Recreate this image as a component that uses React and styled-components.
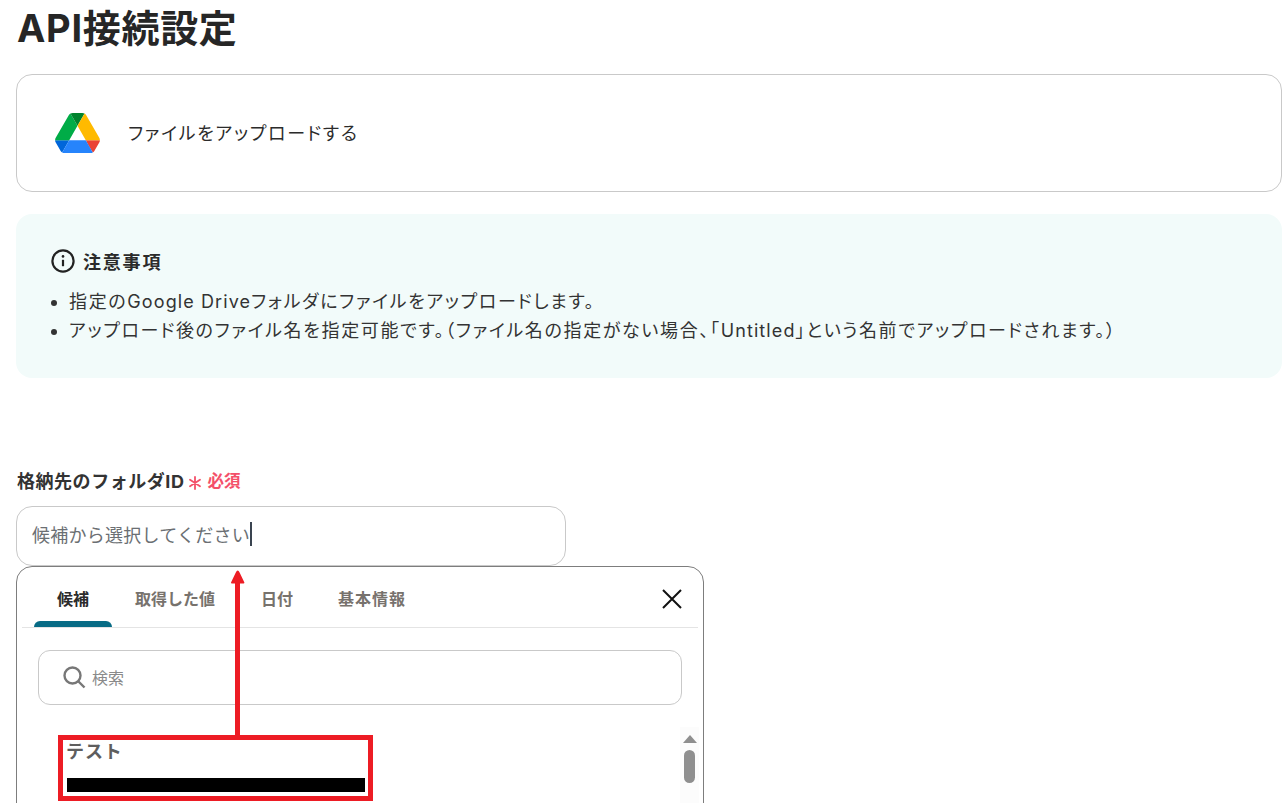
import React from "react";
import styled, { createGlobalStyle } from "styled-components";

const Global = createGlobalStyle`
  html, body { margin: 0; padding: 0; background: #fff; overflow: hidden; }
  body { font-family: Inter, "Noto Sans CJK JP", sans-serif; color: #2b2b2b; }
  * { box-sizing: border-box; }
`;
const Page = styled.div`
  position: relative;
  width: 1288px;
  height: 803px;
  overflow: hidden;
  padding: 0 6px 0 16px;
`;
const Title = styled.h1`
  margin: 0;
  height: 74px;
  padding-left: 1px;
  padding-top: 3px;
  font-size: 38px;
  line-height: 50px;
  letter-spacing: 0.7px;
  font-weight: 700;
  color: #262626;
`;
const ActionCard = styled.div`
  display: flex;
  align-items: center;
  gap: 28px;
  height: 118px;
  padding-left: 38px;
  border: 1px solid #c9c9c9;
  border-radius: 16px;
  font-size: 18px;
  letter-spacing: 0.095em;
  font-feature-settings: "palt";
`;
const CardLabel = styled.span`
  margin-top: -2px;
`;
const Notice = styled.section`
  margin-top: 22px;
  height: 164px;
  padding: 32px 35px 0;
  border-radius: 16px;
  background: #f2fbfa;
`;
const NoticeHead = styled.div`
  display: flex;
  align-items: center;
  gap: 8px;
  height: 30px;
  font-size: 18px;
  font-weight: 700;
  letter-spacing: 0.1em;
  font-feature-settings: "palt";
`;
const NoticeList = styled.ul`
  margin: 11px 0 0;
  padding: 0 0 0 18px;
  font-size: 18px;
  line-height: 29px;
  letter-spacing: 0.092em;
  font-feature-settings: "palt";
  color: #333;
`;
const Latin = styled.span`
  letter-spacing: 1.1px;
`;
const Field = styled.div`
  margin-top: 87px;
  width: 688px;
`;
const Label = styled.div`
  display: flex;
  align-items: center;
  height: 30px;
  padding-left: 1px;
  font-size: 18px;
  font-weight: 700;
  letter-spacing: 0.03em;
  color: #333;
`;
const Required = styled.span`
  display: inline-flex;
  align-items: center;
  margin-left: 4px;
  gap: 5px;
  font-size: 16.5px;
  font-weight: 700;
  letter-spacing: 0;
  color: #f4506a;
`;
const AsteriskMark = styled.svg`
  margin-top: 5px;
`;
const Input = styled.div`
  display: flex;
  align-items: center;
  margin-top: 11px;
  width: 550px;
  height: 60px;
  padding-left: 15px;
  padding-bottom: 4px;
  border: 1px solid #c9c9c9;
  border-radius: 16px;
  font-size: 18px;
  letter-spacing: 0.25px;
  color: #6b6f73;
`;
const Caret = styled.span`
  width: 2px;
  height: 24px;
  background: #3a4450;
`;
const Popover = styled.div`
  height: 300px;
  padding: 0 5px;
  border: 1px solid #7d7d7d;
  border-radius: 16px 16px 0 0;
  background: #fff;
`;
const TabBar = styled.div`
  position: relative;
  display: flex;
  height: 61px;
  border-bottom: 1px solid #e4e4e4;
`;
const Tab = styled.div`
  position: relative;
  width: ${(p) => p.$w}px;
  padding-top: 21px;
  text-align: center;
  font-size: 16px;
  line-height: 22px;
  font-weight: 700;
  letter-spacing: ${(p) => p.$track || 0}px;
  color: ${(p) => (p.$active ? "#2b2b2b" : "#77726d")};
  ${(p) =>
    p.$active &&
    `&::after { content: ""; position: absolute; left: 0; right: 0; bottom: 0; height: 6px; background: #076b85; border-radius: 6px 6px 0 0; }`}
`;
const Tabs = styled.div`
  display: flex;
  padding-left: 12px;
`;
const Close = styled.div`
  position: absolute;
  right: 16px;
  top: 22px;
  width: 20px;
  height: 20px;
`;
const Search = styled.div`
  display: flex;
  align-items: center;
  gap: 6px;
  margin: 22px 16px 0;
  height: 55px;
  padding-left: 23px;
  padding-bottom: 1px;
  border: 1px solid #c9c9c9;
  border-radius: 12px;
  font-size: 16px;
  color: #8a8a8a;
`;
const ListArea = styled.div`
  position: relative;
  display: flex;
  flex-direction: column;
  height: 100px;
  padding: 35px 0 0 44px;
`;
const ItemTitle = styled.div`
  font-size: 18px;
  line-height: 24px;
  font-weight: 700;
  letter-spacing: 0.9px;
  color: #5e5e5e;
`;
const Redacted = styled.div`
  margin: 14px 0 0 1px;
  width: 298px;
  height: 14px;
  background: #000;
`;
const Scrollbar = styled.div`
  position: absolute;
  right: -1px;
  top: 22px;
  width: 19px;
  height: 80px;
  background: #fcfcfc;
`;
const ScrollArrow = styled.div`
  margin: 8px auto 0;
  width: 0;
  height: 0;
  border-left: 7px solid transparent;
  border-right: 7px solid transparent;
  border-bottom: 8px solid #8f8f8f;
`;
const ScrollThumb = styled.div`
  margin: 7px auto 0;
  width: 11px;
  height: 33px;
  border-radius: 6px;
  background: #8f8f8f;
`;
const ArrowShaft = styled.div`
  position: absolute;
  left: 235px;
  top: 580px;
  width: 5px;
  height: 158px;
  background: #ed1c24;
`;
const ArrowHeadMark = styled.svg`
  position: absolute;
  left: 231px;
  top: 570px;
`;
const Highlight = styled.div`
  position: absolute;
  left: 58px;
  top: 735px;
  width: 315px;
  height: 66px;
  border: 5px solid #ed1c24;
`;

const DriveLogo = () => (
  <svg width="45" height="40" viewBox="0 0 87.3 78">
    <path d="m6.6 66.85 3.85 6.65c.8 1.4 1.95 2.5 3.3 3.3l13.75-23.8h-27.5c0 1.55.4 3.1 1.2 4.5z" fill="#0066da" />
    <path d="m43.65 25-13.75-23.8c-1.35.8-2.5 1.9-3.3 3.3l-25.4 44a9.06 9.06 0 0 0 -1.2 4.5h27.5z" fill="#00ac47" />
    <path d="m73.55 76.8c1.35-.8 2.5-1.9 3.3-3.3l1.6-2.75 7.65-13.25c.8-1.4 1.2-2.95 1.2-4.5h-27.502l5.852 11.5z" fill="#ea4335" />
    <path d="m43.65 25 13.75-23.8c-1.35-.8-2.9-1.2-4.5-1.2h-18.5c-1.6 0-3.15.45-4.5 1.2z" fill="#00832d" />
    <path d="m59.8 53h-32.3l-13.75 23.8c1.35.8 2.9 1.2 4.5 1.2h50.8c1.6 0 3.15-.45 4.5-1.2z" fill="#2684fc" />
    <path d="m73.4 26.5-12.7-22c-.8-1.4-1.95-2.5-3.3-3.3l-13.75 23.8 16.15 28h27.45c0-1.55-.4-3.1-1.2-4.5z" fill="#ffba00" />
  </svg>
);
const InfoIcon = () => (
  <svg width="24" height="24" viewBox="0 0 24 24" fill="none" stroke="#222" strokeWidth="2.2">
    <circle cx="12" cy="12" r="10.6" />
    <path d="M12 10.8v6.4" />
    <circle cx="12" cy="7.4" r="1.3" fill="#222" stroke="none" />
  </svg>
);
const Asterisk = () => (
  <AsteriskMark width="14" height="14" viewBox="0 0 14 14" stroke="#f4506a" strokeWidth="1.8" strokeLinecap="round">
    <path d="M7 1v12M2 3.8l10 6.4M12 3.8 2 10.2" />
  </AsteriskMark>
);
const SearchIcon = () => (
  <svg width="24" height="24" viewBox="0 0 24 24" fill="none" stroke="#777" strokeWidth="2.4">
    <circle cx="10.5" cy="10.5" r="8" />
    <path d="m16.5 16.5 6 6" />
  </svg>
);
const CloseIcon = () => (
  <svg width="20" height="20" viewBox="0 0 20 20" stroke="#111" strokeWidth="2" fill="none">
    <path d="M1 1l18 18M19 1 1 19" />
  </svg>
);
const ArrowHead = () => (
  <ArrowHeadMark width="14" height="14" viewBox="0 0 14 14" fill="#ed1c24">
    <path d="M6.7 0.4Q7.7 0.4 8.6 2.4L13.4 12.6Q13.4 13.6 12.6 13.6H.8Q0 13.6 0 12.6L4.8 2.4Q5.7 .4 6.7 .4Z" />
  </ArrowHeadMark>
);

export default function App() {
  return (
    <Page>
      <Global />
      <Title>API接続設定</Title>
      <ActionCard>
        <DriveLogo />
        <CardLabel>ファイルをアップロードする</CardLabel>
      </ActionCard>
      <Notice>
        <NoticeHead>
          <InfoIcon />
          <span>注意事項</span>
        </NoticeHead>
        <NoticeList>
          <li>指定の<Latin>Google Drive</Latin>フォルダにファイルをアップロードします。</li>
          <li>
            {"アップロード後のファイル名を指定可能です。\uFF08ファイル名の指定がない場合、「"}
            <Latin>Untitled</Latin>
            {"」という名前でアップロードされます。\uFF09"}
          </li>
        </NoticeList>
      </Notice>
      <Field>
        <Label>
          格納先のフォルダID
          <Required>
            <Asterisk />
            必須
          </Required>
        </Label>
        <Input>
          候補から選択してください
          <Caret />
        </Input>
        <Popover>
          <TabBar>
            <Tabs>
              <Tab $w={78} $active>候補</Tab>
              <Tab $w={126}>取得した値</Tab>
              <Tab $w={78}>日付</Tab>
              <Tab $w={112} $track={1}>基本情報</Tab>
            </Tabs>
            <Close>
              <CloseIcon />
            </Close>
          </TabBar>
          <Search>
            <SearchIcon />
            検索
          </Search>
          <ListArea>
            <ItemTitle>テスト</ItemTitle>
            <Redacted />
            <Scrollbar>
              <ScrollArrow />
              <ScrollThumb />
            </Scrollbar>
          </ListArea>
        </Popover>
      </Field>
      <ArrowShaft />
      <ArrowHead />
      <Highlight />
    </Page>
  );
}
